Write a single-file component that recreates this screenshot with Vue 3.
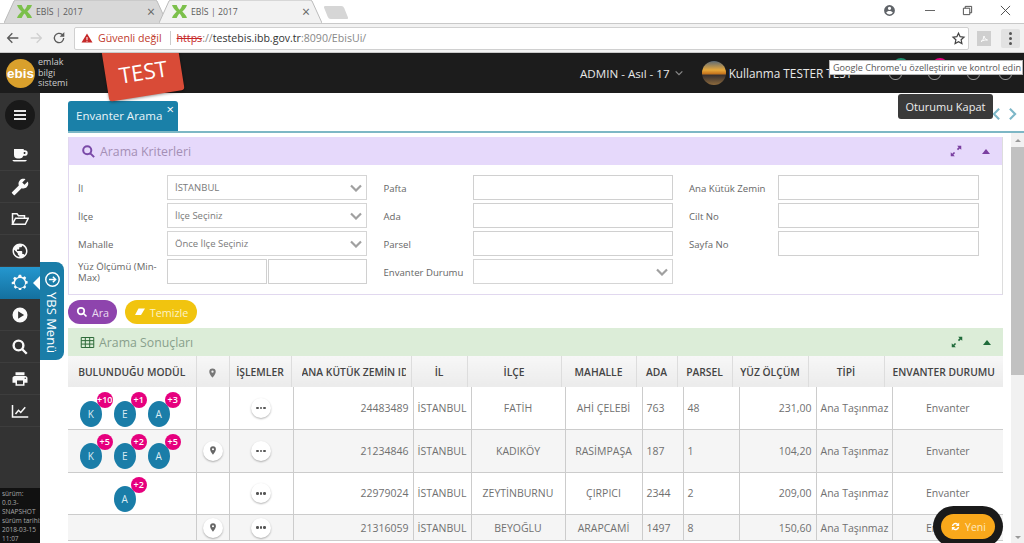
<template>
  <div class="page">
    <!-- browser chrome -->
    <div class="tabstrip">
      <div v-for="(t, i) in 2" :key="i" class="btab" :class="{ on: i === 1 }">
        <svg class="btab-bg" viewBox="0 0 163 23" preserveAspectRatio="none"><path d="M0 23 L10 1 Q11 0 13 0 H150 Q152 0 153 1 L163 23" /></svg>
        <svg class="fav" viewBox="0 0 16 16"><path d="M0 1h5c1 3 2 4 3 5 1-1 2-2 3-5h5c-1 3-3 5-5 7 2 2 4 4 5 7h-5c-1-3-2-4-3-5-1 1-2 2-3 5H0c1-3 3-5 5-7C3 6 1 4 0 1z" /></svg>
        <span class="btab-title">EBİS | 2017</span>
        <span class="btab-x">×</span>
      </div>
      <div class="newtab"></div>
      <div class="winctl">
        <svg class="ctl acct" viewBox="0 0 24 24"><path d="M12 2a10 10 0 1 0 0 20 10 10 0 0 0 0-20zm0 3a3 3 0 1 1 0 6 3 3 0 0 1 0-6zm0 14.2a7.2 7.2 0 0 1-6-3.2c0-2 4-3.1 6-3.1s6 1.1 6 3.1a7.2 7.2 0 0 1-6 3.2z" /></svg>
        <span class="ctl min"></span>
        <svg class="ctl rest" viewBox="0 0 12 12"><path d="M1.5 3.5h7v7h-7zM3.5 3.5v-2h7v7h-2" /></svg>
        <svg class="ctl close" viewBox="0 0 12 12"><path d="M1 1l10 10M11 1L1 11" /></svg>
      </div>
    </div>

    <div class="toolbar">
      <svg class="nav" viewBox="0 0 24 24"><path d="M20 12H5M11 5l-7 7 7 7" /></svg>
      <svg class="nav off" viewBox="0 0 24 24"><path d="M4 12h15M13 5l7 7-7 7" /></svg>
      <svg class="nav" viewBox="0 0 24 24"><path d="M19 12a7 7 0 1 1-2.2-5.1L19 9" /><path class="fillp" d="M20 3v7h-7z" /></svg>
      <div class="omnibox">
        <svg class="warn" viewBox="0 0 24 24"><path d="M12 3L1 21h22zM11 10h2v6h-2zm0 7.5h2v2h-2z" fill-rule="evenodd" /></svg>
        <span class="notsafe">Güvenli değil</span>
        <i class="sep"></i>
        <span class="url"><s>https</s><b>://</b><em>testebis.ibb.gov.tr</em><b>:8090/EbisUi/</b></span>
        <svg class="star" viewBox="0 0 24 24"><path d="M12 3.5l2.6 5.6 6.1.7-4.5 4.2 1.2 6-5.4-3-5.4 3 1.2-6-4.5-4.2 6.1-.7z" /></svg>
      </div>
      <div class="ext"><svg viewBox="0 0 24 24"><path d="M6 19c3-1 5-5 6-11 1 5 3 7 7 8-5-.5-9 .5-13 3z" /></svg></div>
      <div class="kebab"><i></i><i></i><i></i></div>
    </div>

    <!-- app header -->
    <header class="apphead">
      <div class="logo">
        <span class="logo-disc">ebis</span>
        <span class="logo-txt">emlak<br />bilgi<br />sistemi</span>
      </div>
      <div class="testflag">TEST</div>
      <div class="role">ADMIN - Asıl - 17
        <svg viewBox="0 0 12 12"><path d="M2 4l4 4 4-4" /></svg>
      </div>
      <div class="avatar"></div>
      <div class="uname">Kullanma TESTER TEST</div>
      <div class="headicons">
        <span class="hi"><i class="dot green"></i></span>
        <span class="hi"><i class="dot pink"></i></span>
        <span class="hi"></span>
        <span class="hi"></span>
      </div>
    </header>
    <div class="tip-chrome">Google Chrome'u özelleştirin ve kontrol edin</div>

    <div class="shell">
      <aside class="side">
        <div class="burger"><span><i></i><i></i><i></i></span></div>
        <div v-for="it in sideItems" :key="it.name" class="sitem" :class="{ active: it.active }">
          <svg viewBox="0 0 24 24" :class="it.kind"><path :d="it.d" fill-rule="evenodd" /></svg>
        </div>
        <div class="version">sürüm:<br />0.0.3-<br />SNAPSHOT<br />sürüm tarihi:<br />2018-03-15<br />11:07</div>
      </aside>

      <div class="ybs">
        <svg viewBox="0 0 24 24"><circle cx="12" cy="12" r="9.5" /><path d="M7 12h9M12.5 8l4 4-4 4" /></svg>
        <span>YBS Menü</span>
      </div>

      <main class="main">
        <div class="content">
          <div class="tabsrow">
            <div class="apptab">Envanter Arama<span class="apptab-x">×</span></div>
            <div class="tabnav">
              <svg viewBox="0 0 12 16"><path d="M9 2L3 8l6 6" /></svg>
              <svg viewBox="0 0 12 16"><path d="M3 2l6 6-6 6" /></svg>
            </div>
            <div class="tip-logout">Oturumu Kapat</div>
          </div>

          <section class="panel purple">
            <div class="phead">
              <svg class="ptitle-ic" viewBox="0 0 24 24"><path d="M10 3.5a6.5 6.5 0 1 0 0 13 6.5 6.5 0 0 0 0-13zM15 15l6 6" /></svg>
              <span class="ptitle">Arama Kriterleri</span>
              <svg class="expand" viewBox="0 0 24 24"><path d="M14 3h7v7l-2.5-2.5-3 3-2-2 3-3zM10 21H3v-7l2.5 2.5 3-3 2 2-3 3z" /></svg>
              <span class="caret"></span>
            </div>
            <div class="form">
              <div v-for="f in fields" :key="f.label" class="frow">
                <label :class="{ tight: f.label.length > 18 }">{{ f.label }}</label>
                <div v-if="f.type === 'select'" class="sel">
                  <span>{{ f.value }}</span>
                  <svg viewBox="0 0 12 8"><path d="M1 1.5l5 5 5-5" /></svg>
                </div>
                <div v-else-if="f.type === 'range'" class="range"><input /><input /></div>
                <input v-else />
              </div>
            </div>
          </section>

          <div class="actions">
            <button class="btn ara">
              <svg viewBox="0 0 24 24"><path d="M10 3.5a6.5 6.5 0 1 0 0 13 6.5 6.5 0 0 0 0-13zM15 15l6 6" /></svg>Ara
            </button>
            <button class="btn temizle">
              <svg viewBox="0 0 24 24"><path d="M9 5h13l-8 13H2z" /></svg>Temizle
            </button>
          </div>

          <section class="results">
            <div class="phead green">
              <svg class="tbl-ic" viewBox="0 0 24 20"><path d="M2 2h20v16H2zM2 7h20M2 12.5h20M8.5 2v16M15.5 2v16" /></svg>
              <span class="ptitle">Arama Sonuçları</span>
              <svg class="expand" viewBox="0 0 24 24"><path d="M14 3h7v7l-2.5-2.5-3 3-2-2 3-3zM10 21H3v-7l2.5 2.5 3-3 2 2-3 3z" /></svg>
              <span class="caret"></span>
            </div>
            <table class="thead">
              <colgroup><col v-for="(w, i) in headWidths" :key="i" :width="w" /></colgroup>
              <thead>
                <tr>
                  <th>BULUNDUĞU MODÜL</th>
                  <th><svg class="pin" viewBox="0 0 24 24"><path :d="pinPath" fill-rule="evenodd" /></svg></th>
                  <th>İŞLEMLER</th>
                  <th class="clip"><span>ANA KÜTÜK ZEMİN ID</span></th>
                  <th>İL</th><th>İLÇE</th><th>MAHALLE</th><th>ADA</th><th>PARSEL</th><th>YÜZ ÖLÇÜM</th><th>TİPİ</th><th>ENVANTER DURUMU</th>
                </tr>
              </thead>
            </table>
            <table class="tbody">
              <colgroup><col v-for="(w, i) in bodyWidths" :key="i" :width="w" /></colgroup>
              <tbody>
                <tr v-for="r in rows" :key="r.id" :class="{ short: r.short }">
                  <td>
                    <div class="mods">
                      <span v-for="m in r.mods" :key="m.l" class="mod">{{ m.l }}<i>{{ m.n }}</i></span>
                    </div>
                  </td>
                  <td class="c"><span v-if="r.pin" class="rbtn"><svg class="pin" viewBox="0 0 24 24"><path :d="pinPath" fill-rule="evenodd" /></svg></span></td>
                  <td class="c"><span class="rbtn dots"><i></i><i></i><i></i></span></td>
                  <td class="r">{{ r.id }}</td>
                  <td>{{ r.il }}</td>
                  <td class="c">{{ r.ilce }}</td>
                  <td class="c">{{ r.mah }}</td>
                  <td>{{ r.ada }}</td>
                  <td>{{ r.parsel }}</td>
                  <td class="r">{{ r.yuz }}</td>
                  <td>Ana Taşınmaz</td>
                  <td class="c">Envanter</td>
                </tr>
              </tbody>
            </table>
          </section>
        </div>
        <div class="scroll">
          <span class="up"></span>
          <div class="thumb"></div>
          <span class="down"></span>
        </div>
      </main>

      <button class="fab">
        <svg viewBox="0 0 24 24"><path d="M4 11a8 8 0 0 1 13.5-5L20 3.5V11h-7.5l2.8-2.8A5 5 0 0 0 7.2 11zM20 13a8 8 0 0 1-13.5 5L4 20.5V13h7.5l-2.8 2.8a5 5 0 0 0 8.1-2.8z" /></svg>Yeni
      </button>
    </div>
  </div>
</template>

<script setup>
const pinPath = 'M12 2a7 7 0 0 0-7 7c0 5.25 7 13 7 13s7-7.75 7-13a7 7 0 0 0-7-7zm0 4.5a2.5 2.5 0 1 1 0 5 2.5 2.5 0 0 1 0-5z'

const sideItems = [
  { name: 'coffee', d: 'M4 4h13v1.5h1.5a3.7 3.7 0 0 1 0 7.5h-2A5 5 0 0 1 12 16.5H9A5 5 0 0 1 4 11.5zM17 8v2.5h1.5a1.3 1.3 0 0 0 0-2.5zM2 18.5h19c0 1-1 2-2 2H4c-1 0-2-1-2-2z' },
  { name: 'wrench', kind: 'flip', d: 'M22.7 19l-9.1-9.1c.9-2.3.4-5-1.5-6.9-2-2-5-2.4-7.4-1.3L9 6 6 9 1.6 4.7C.4 7.1.9 10.1 2.9 12.1c1.9 1.9 4.6 2.4 6.9 1.5l9.1 9.1c.4.4 1 .4 1.4 0l2.3-2.3c.5-.4.5-1.1.1-1.4z' },
  { name: 'folder', kind: 'line', d: 'M2 19V5h6l2 2.5h8V11M2 19l4-8h17l-4 8z' },
  { name: 'globe', d: 'M12 2C6.48 2 2 6.48 2 12s4.48 10 10 10 10-4.48 10-10S17.52 2 12 2zm-1 17.93c-3.95-.49-7-3.85-7-7.93 0-.62.08-1.21.21-1.79L9 15v1c0 1.1.9 2 2 2v1.93zm6.9-2.54c-.26-.81-1-1.39-1.9-1.39h-1v-3c0-.55-.45-1-1-1H8v-2h2c.55 0 1-.45 1-1V7h2c1.1 0 2-.9 2-2v-.41c2.93 1.19 5 4.06 5 7.41 0 2.08-.8 3.97-2.1 5.39z' },
  { name: 'gear', active: true, d: 'M10.5 1h3l.6 2.4 1.9.8 2.2-1.3 2.1 2.1-1.3 2.2.8 1.9 2.4.6v3l-2.4.6-.8 1.9 1.3 2.2-2.1 2.1-2.2-1.3-1.9.8-.6 2.4h-3l-.6-2.4-1.9-.8-2.2 1.3-2.1-2.1 1.3-2.2-.8-1.9L1 13.5v-3l2.4-.6.8-1.9-1.3-2.2L5 3.7l2.2 1.3 1.9-.8zM12 5.3a6.7 6.7 0 1 0 0 13.4 6.7 6.7 0 0 0 0-13.4z' },
  { name: 'play', d: 'M12 2a10 10 0 1 0 0 20 10 10 0 0 0 0-20zM9.5 7l8 5-8 5z' },
  { name: 'search', kind: 'line thick', d: 'M10 3.5a6.5 6.5 0 1 0 0 13 6.5 6.5 0 0 0 0-13zM15 15l6 6' },
  { name: 'print', d: 'M19 8H5c-1.66 0-3 1.34-3 3v6h4v4h12v-4h4v-6c0-1.66-1.34-3-3-3zm-3 11H8v-5h8v5zm3-7c-.55 0-1-.45-1-1s.45-1 1-1 1 .45 1 1-.45 1-1 1zm-1-9H6v4h12V3z' },
  { name: 'chart', kind: 'line', d: 'M2 4v16h21M6 16l4-5 3 3 6-7' },
]

const fields = [
  { label: 'İl', type: 'select', value: 'İSTANBUL' },
  { label: 'Pafta' },
  { label: 'Ana Kütük Zemin' },
  { label: 'İlçe', type: 'select', value: 'İlçe Seçiniz' },
  { label: 'Ada' },
  { label: 'Cilt No' },
  { label: 'Mahalle', type: 'select', value: 'Önce İlçe Seçiniz' },
  { label: 'Parsel' },
  { label: 'Sayfa No' },
  { label: 'Yüz Ölçümü (Min-Max)', type: 'range' },
  { label: 'Envanter Durumu', type: 'select', value: '' },
]

const headWidths = [128, 33, 62, 120, 56, 94, 75, 41, 55, 76, 76, 119]
const bodyWidths = [128, 33, 64, 120, 58, 94, 77, 41, 56, 77, 76, 111]

const rows = [
  { id: 24483489, il: 'İSTANBUL', ilce: 'FATİH', mah: 'AHİ ÇELEBİ', ada: 763, parsel: 48, yuz: '231,00',
    mods: [{ l: 'K', n: '+10' }, { l: 'E', n: '+1' }, { l: 'A', n: '+3' }] },
  { id: 21234846, il: 'İSTANBUL', ilce: 'KADIKÖY', mah: 'RASİMPAŞA', ada: 187, parsel: 1, yuz: '104,20', pin: true,
    mods: [{ l: 'K', n: '+5' }, { l: 'E', n: '+2' }, { l: 'A', n: '+5' }] },
  { id: 22979024, il: 'İSTANBUL', ilce: 'ZEYTİNBURNU', mah: 'ÇIRPICI', ada: 2344, parsel: 2, yuz: '209,00',
    mods: [{ l: 'A', n: '+2' }] },
  { id: 21316059, il: 'İSTANBUL', ilce: 'BEYOĞLU', mah: 'ARAPCAMİ', ada: 1497, parsel: 8, yuz: '150,60', pin: true, short: true,
    mods: [] },
]
</script>

<style scoped>
.page {
  position: relative;
  width: 1024px; height: 543px;
  overflow: hidden;
  background: #fff;
  font-family: "Open Sans", "Noto Sans", sans-serif;
  color: #555;
}

/* browser */
.tabstrip {
  position: relative; z-index: 3;
  display: flex; align-items: flex-end;
  height: 23px; padding-left: 4px;
  background: #fff;
}
.btab {
  position: relative;
  display: flex; align-items: center;
  width: 163px; height: 23px; margin-right: -8px; padding-left: 13px;
  box-sizing: border-box;
  font-size: 8.7px; color: #555;
}
.btab.on { z-index: 1; }
.btab-bg { position: absolute; inset: 0; width: 100%; height: 100%; }
.btab-bg path { fill: #d8d8d8; stroke: #bbb; stroke-width: 1; }
.btab.on .btab-bg path { fill: #f2f2f2; }
.fav { position: relative; width: 15px; height: 15px; margin-right: 4px; }
.fav path { fill: #7cc04b; }
.btab-title { position: relative; flex: 1; color: #5c5c5c; }
.btab-x { position: relative; width: 20px; font-size: 14px; color: #666; }
.newtab {
  width: 20px; height: 13px; margin: 0 0 4px 12px;
  background: #d6d6d6;
  transform: skewX(22deg);
  border-radius: 2px;
}
.winctl { display: flex; align-items: center; margin-left: auto; height: 20px; align-self: flex-start; }
.ctl { display: block; }
.acct { width: 13px; height: 13px; margin-right: 29px; fill: #5f6368; }
.min { width: 10px; height: 1px; background: #666; margin-right: 27px; }
.rest { width: 11px; height: 11px; margin-right: 27px; }
.close { width: 11px; height: 11px; margin-right: 13px; }
.rest path, .close path { fill: none; stroke: #444; stroke-width: 1; }

.toolbar {
  position: relative; z-index: 3;
  display: flex; align-items: center;
  height: 30px; padding-left: 5px;
  background: #f2f2f2;
  border-bottom: 1px solid #c9c9c9;
  border-top: 1px solid #c9c9c9;
  box-sizing: border-box;
}
.nav { width: 16px; height: 16px; margin-right: 7px; flex: none; }
.nav path { fill: none; stroke: #5a5a5a; stroke-width: 2; }
.nav .fillp { fill: #5a5a5a; stroke: none; }
.nav.off path { stroke: #d0d0d0; }
.omnibox {
  display: flex; align-items: center;
  width: 895px; height: 23px; padding-left: 6px;
  background: #fff;
  border: 1px solid #d0d0d0; border-radius: 2px;
  box-sizing: border-box;
  font-size: 10.6px;
}
.warn { width: 12px; height: 12px; fill: #c62828; margin-right: 5px; }
.notsafe { color: #c0392b; }
.sep { width: 1px; height: 14px; background: #ccc; margin: 0 6px 0 8px; }
.url { white-space: nowrap; color: #888; }
.url s { color: #c62828; }
.url b { font-weight: 400; color: #888; }
.url em { font-style: normal; color: #333; }
.star { width: 15px; height: 15px; margin-left: auto; margin-right: 2px; fill: none; stroke: #444; stroke-width: 2; }
.ext {
  display: flex; align-items: center; justify-content: center;
  width: 14px; height: 15px; margin-left: 8px;
  background: #cfcfcf;
}
.ext svg { width: 12px; height: 12px; fill: none; stroke: #fff; stroke-width: 2; }
.kebab {
  display: flex; flex-direction: column; align-items: center; justify-content: center; gap: 2px;
  width: 19px; height: 19px; margin-left: 10px;
  background: #e2e2e2; border-radius: 2px;
}
.kebab i { width: 3px; height: 3px; background: #555; border-radius: 50%; }

.apphead {
  position: relative; z-index: 2;
  display: flex; align-items: center;
  height: 40px;
  background: #1c1c1c;
  color: #e8e8e8;
}
.logo { display: flex; align-items: center; width: 100px; padding-left: 6px; box-sizing: border-box; }
.logo-disc {
  display: flex; align-items: center; justify-content: center;
  width: 29px; height: 29px; margin-right: 3px;
  border-radius: 50%;
  background: #d9a02c;
  color: #fff;
  font-family: "Liberation Sans", sans-serif;
  font-size: 13.5px; font-weight: 700;
}
.logo-txt { font-size: 9px; line-height: 10.5px; color: #ccc; }
.testflag {
  position: absolute; left: 105px; top: -9px;
  width: 76px; height: 52px;
  padding-top: 12px; box-sizing: border-box;
  background: #d94b37;
  border-radius: 3px;
  box-shadow: 0 1px 3px rgba(0, 0, 0, .4);
  color: #fff;
  font-size: 22px; text-align: center;
  transform: rotate(-9deg);
}
.role {
  display: flex; align-items: center; gap: 4px;
  margin-left: 480px;
  font-size: 11.6px;
  white-space: nowrap;
}
.role svg { width: 10px; height: 10px; fill: none; stroke: #888; stroke-width: 1.5; }
.avatar {
  width: 24px; height: 24px; margin-left: 18px;
  border-radius: 50%;
  background: linear-gradient(#5b6a78 0, #e8a83a 38%, #c9781f 52%, #3a3230 60%, #8d6a3c 100%);
}
.uname { margin-left: 3px; font-size: 11.8px; white-space: nowrap; }
.headicons { display: flex; gap: 26px; margin-left: auto; margin-right: 12px; }
.hi {
  position: relative;
  width: 13px; height: 14px;
  border: 1px solid #999;
  border-radius: 0 0 6px 6px;
  box-sizing: border-box;
}
.hi:last-child { margin-left: -7px; }
.dot { position: absolute; left: 3px; top: -9px; width: 16px; height: 16px; border-radius: 50%; }
.dot.green { background: #1d8f6e; }
.dot.pink { background: #e6007e; }

.tip-chrome {
  position: absolute; z-index: 5; left: 829px; top: 60px;
  width: 194px; height: 15px; padding: 0 0 0 3px;
  background: #fff;
  border: 1px solid #b5b5b5;
  box-sizing: border-box;
  font-size: 9.1px; line-height: 13px;
  color: #575757;
  white-space: nowrap;
}

/* app body */
.shell { position: relative; display: flex; height: 450px; }
.side {
  position: relative;
  display: flex; flex-direction: column;
  width: 40px; flex: none;
  background: #333;
}
.burger { display: flex; align-items: center; justify-content: center; height: 44px; margin-bottom: 2px; }
.burger span {
  display: flex; flex-direction: column; align-items: center; justify-content: center; gap: 2px;
  width: 30px; height: 30px;
  border-radius: 50%;
  background: #191919;
}
.burger i { width: 12px; height: 2px; background: #e8e8e8; }
.sitem {
  position: relative;
  display: flex; align-items: center; justify-content: center;
  height: 32px;
  border-bottom: 1px solid #3d3d3d;
  box-sizing: border-box;
}
.sitem svg { width: 18px; height: 18px; fill: #fafafa; }
.sitem .flip { transform: scaleX(-1); }
.sitem .line { fill: none; stroke: #fafafa; stroke-width: 2; }
.sitem .thick { stroke-width: 3.2; }
.sitem.active { background: linear-gradient(#2497cf, #14709f); border-bottom: 0; }
.sitem.active::after {
  content: "";
  position: absolute; right: 0; top: 9px;
  border: 7px solid transparent; border-right-color: #fff; border-left: 0;
}
.version {
  position: absolute; left: 0; right: 0; bottom: 0;
  height: 55px; padding: 1px 0 0 2px;
  background: #111;
  box-sizing: border-box;
  font-size: 6.5px; line-height: 9px;
  color: #a8a8a8;
  white-space: nowrap; overflow: hidden;
}
.ybs {
  position: absolute; z-index: 2; left: 40px; top: 169px;
  display: flex; flex-direction: column; align-items: center;
  width: 24px; height: 98px; padding-top: 9px;
  background: #1a7da8;
  border-radius: 0 8px 8px 0;
  box-sizing: border-box;
  color: #fff;
}
.ybs svg { width: 17px; height: 17px; fill: none; stroke: #fff; stroke-width: 2; flex: none; }
.ybs span { margin-top: 4px; writing-mode: vertical-rl; font-size: 13px; white-space: nowrap; }

.main { display: flex; flex: 1; min-width: 0; }
.content { width: 935px; margin-left: 28px; flex: none; }
.tabsrow {
  position: relative;
  display: flex; align-items: flex-end;
  width: 956px; height: 40px;
  border-bottom: 2px solid #7db7c5;
  box-sizing: border-box;
}
.apptab {
  position: relative;
  width: 110px; height: 30px; padding: 0 0 0 8px;
  background: #1a80a8;
  border-radius: 3px 3px 0 0;
  box-sizing: border-box;
  color: #e9f4f8;
  font-size: 11.5px; line-height: 30px;
}
.apptab-x { position: absolute; right: 4px; top: -7px; font-size: 13px; color: #fff; }
.tabnav { display: flex; gap: 5px; margin-left: auto; margin-right: 6px; margin-bottom: 10px; }
.tabnav svg { width: 11px; height: 14px; fill: none; stroke: #7db7c8; stroke-width: 2.4; }
.tip-logout {
  position: absolute; left: 830px; top: 1px;
  width: 95px; height: 25px;
  background: #3a3a3a;
  border-radius: 3px;
  color: #eee;
  font-size: 11px; line-height: 25px; text-align: center;
}

.panel { margin-top: 4px; border: 1px solid #e1d8ef; border-top: 0; border-right-color: #ddd; }
.phead {
  display: flex; align-items: center;
  height: 28px; padding-left: 12px;
  background: #e6d9fb;
}
.ptitle-ic { width: 15px; height: 15px; fill: none; stroke: #7a4aa8; stroke-width: 3.2; margin-right: 4px; }
.ptitle { color: #a48fb5; font-size: 12.3px; }
.expand { width: 14px; height: 14px; margin-left: auto; fill: #7a3fa0; }
.caret {
  width: 0; height: 0; margin: 0 12px 0 19px;
  border: 4.5px solid transparent; border-bottom: 5px solid #7a3fa0; border-top: 0;
}
.form {
  display: grid;
  grid-template-columns: 289px 289px 290px;
  column-gap: 16.5px; row-gap: 3px;
  padding: 10px 0 10px 9px;
}
.frow { display: flex; align-items: center; height: 25px; min-width: 0; }
label { width: 89px; flex: none; padding-top: 1px; font-size: 9.6px; color: #666; }
label.tight { line-height: 11px; }
input {
  flex: 1 1 0; width: 0; min-width: 0; height: 25px; padding: 0;
  background: #fff;
  border: 1px solid #d0d0d0;
  box-sizing: border-box;
  outline: none;
}
.sel {
  display: flex; align-items: center; justify-content: space-between;
  flex: 1; height: 25px; padding: 0 4px 0 7px;
  border: 1px solid #d5d5d5;
  box-sizing: border-box;
  font-size: 9.5px; color: #7a7a7a;
}
.sel svg { width: 12px; height: 8px; fill: none; stroke: #a0a0a0; stroke-width: 2.2; }
.range { display: flex; flex: 1; gap: 1px; min-width: 0; }
.actions { display: flex; gap: 8px; height: 24px; margin: 5px 0 4px; }
button { border: 0; padding: 0; font-family: inherit; }
.btn {
  display: flex; align-items: center; justify-content: center; gap: 4px;
  height: 24px;
  border-radius: 12px;
  font-size: 10.8px;
}
.btn svg { width: 12px; height: 12px; }
.ara { width: 49px; background: #8e44ad; color: #e9dcf0; }
.ara svg { fill: none; stroke: #fff; stroke-width: 3.5; }
.temizle { width: 72px; background: #f1c40f; color: #fdf3c4; }
.temizle svg { fill: #fff; }

.results { width: 935px; }
.phead.green { background: #dcedd8; }
.green .ptitle { color: #88a08c; }
.tbl-ic { width: 15px; height: 13px; margin-right: 4px; fill: none; stroke: #2e6b3a; stroke-width: 1.6; }
.green .expand { fill: #1f6b3a; }
.green .caret { border-bottom-color: #1f6b3a; }

table { width: 935px; table-layout: fixed; border-collapse: collapse; }
th {
  height: 31px; padding: 0 2px;
  background: linear-gradient(#f7f7f7, #ebebeb);
  border-right: 1px solid #ddd;
  font-size: 10.3px; font-weight: 600;
  color: #444;
  white-space: nowrap; overflow: hidden;
}
th:last-child { border-right: 0; }
.clip span { display: block; width: 104px; margin-left: 8px; overflow: hidden; text-align: left; }
th .pin { width: 11px; height: 12px; fill: #777; vertical-align: middle; }
td {
  height: 42.5px; padding: 0 4px;
  border-right: 1px solid #ccc;
  border-bottom: 1px solid #ccc;
  box-sizing: border-box;
  font-size: 10.5px; color: #707070;
  white-space: nowrap; overflow: hidden;
}
td:last-child { border-right: 0; }
td.c { text-align: center; }
td.r { text-align: right; }
tr:nth-child(even) td { background: #f5f5f5; }
tr.short td { height: 26px; }
.mods { display: flex; justify-content: center; gap: 12px; padding: 11px 14px 0 0; }
.mod {
  position: relative;
  width: 22px; height: 26px;
  border-radius: 50%;
  background: #1a7da8;
  color: #dcecf3;
  font-size: 10px; line-height: 26px; text-align: center;
}
.mod i {
  position: absolute; left: 17px; top: -9px;
  width: 16px; height: 16px;
  border-radius: 50%;
  background: #e6007e;
  overflow: hidden;
  color: #fff;
  font-size: 9px; font-style: normal; font-weight: 600; line-height: 16px;
}
.rbtn {
  display: inline-flex; align-items: center; justify-content: center; gap: 1px;
  width: 20px; height: 20px;
  border-radius: 50%;
  background: #fff;
  box-shadow: 0 1px 2px rgba(0, 0, 0, .3);
  vertical-align: middle;
}
.rbtn .pin { width: 10px; height: 11px; fill: #666; }
.dots i { width: 2.5px; height: 2.5px; background: #555; border-radius: 50%; }

.scroll {
  position: relative;
  width: 13px; margin: 40px 0 0 8px; flex: none;
  background: #f1f1f1;
}
.up, .down {
  position: absolute; left: 4px;
  border: 3px solid transparent; border-top: 0; border-bottom: 3px solid #999;
}
.up { top: 6px; }
.down { bottom: 4px; transform: rotate(180deg); }
.thumb { margin-top: 14px; height: 228px; background: #c1c1c1; }

.fab {
  position: absolute; left: 941px; top: 421px;
  display: flex; align-items: center; justify-content: center; gap: 4px;
  width: 54px; height: 25px;
  border-radius: 13px;
  background: #f9a81b;
  box-shadow: 0 0 0 8px #1a1a1a;
  color: #fde9bf;
  font-size: 10.5px;
}
.fab svg { width: 11px; height: 11px; fill: #fff; }
</style>

<style>
html, body { margin: 0; overflow: hidden; }
</style>
